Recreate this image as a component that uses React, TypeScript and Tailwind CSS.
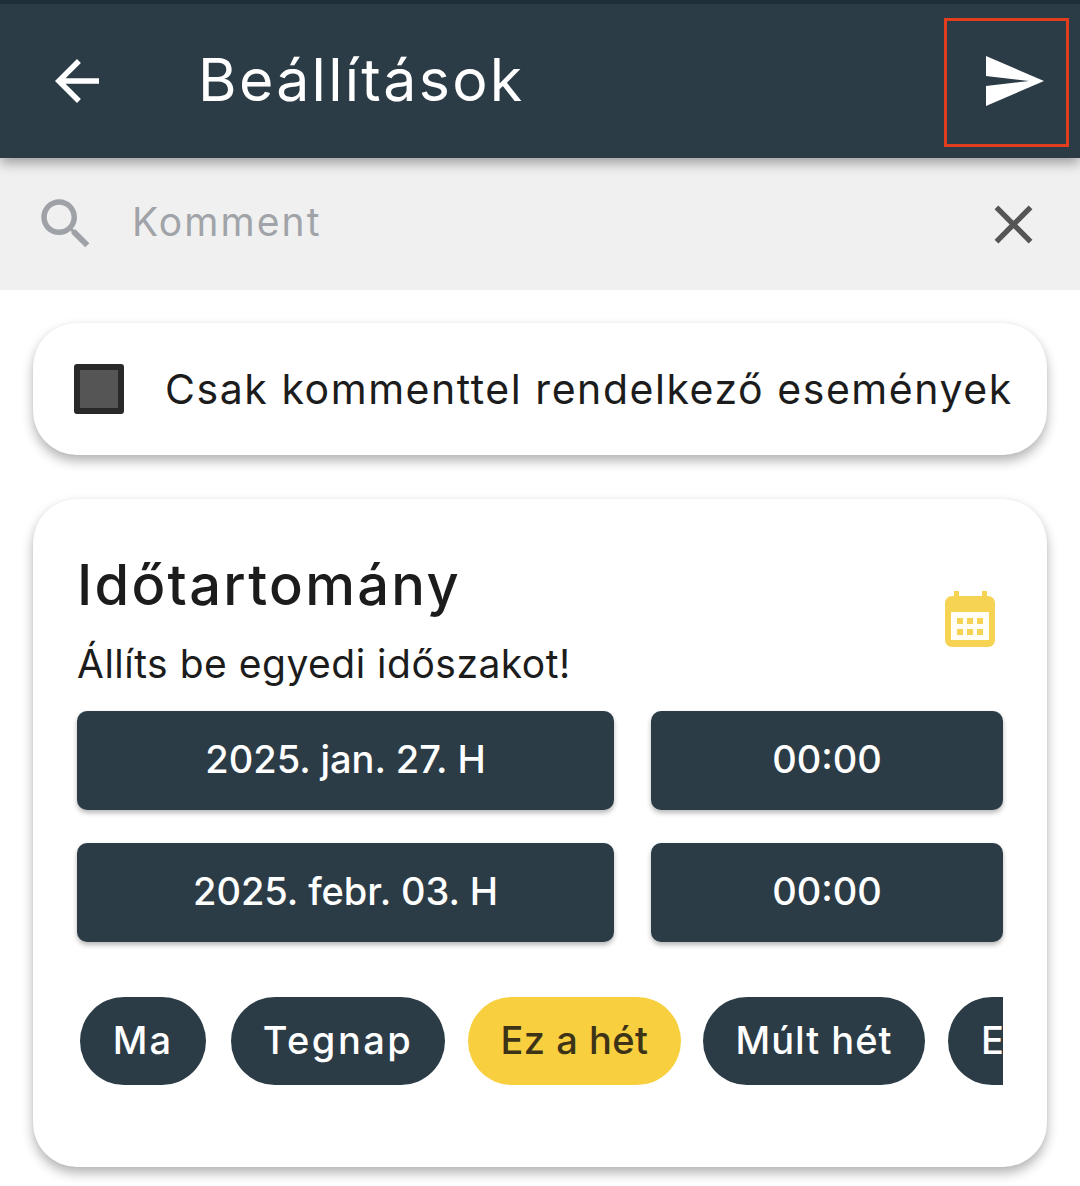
const navy = "bg-[#2c3c46]";

function ArrowBackIcon() {
  return (
    <svg viewBox="0 0 24 24" className="w-[66px] h-[66px]" fill="#ffffff">
      <path d="M20 11H7.83l5.59-5.59L12 4l-8 8 8 8 1.41-1.41L7.83 13H20v-2z" />
    </svg>
  );
}

function SearchIcon() {
  return (
    <svg viewBox="0 0 24 24" className="w-[66px] h-[66px]" fill="#9ea2a7">
      <path d="M15.5 14h-.79l-.28-.27C15.41 12.59 16 11.11 16 9.5 16 5.91 13.09 3 9.5 3S3 5.91 3 9.5 5.91 16 9.5 16c1.61 0 3.09-.59 4.23-1.57l.27.28v.79l5 4.99L20.49 19l-4.99-5zm-6 0C7.01 14 5 11.99 5 9.5S7.01 5 9.5 5 14 7.01 14 9.5 11.99 14 9.5 14z" />
    </svg>
  );
}

function CloseIcon() {
  return (
    <svg viewBox="0 0 24 24" className="w-[65px] h-[65px]" fill="#555555">
      <path d="M19 6.41 17.59 5 12 10.59 6.41 5 5 6.41 10.59 12 5 17.59 6.41 19 12 13.41 17.59 19 19 17.59 13.41 12z" />
    </svg>
  );
}

function SendIcon() {
  return (
    <svg viewBox="0 0 60 50" className="w-[60px] h-[50px]" fill="#ffffff">
      <path d="M1 0 L59 25 L1 50 L1 30 L44 25 L1 20 Z" />
    </svg>
  );
}

function CalendarIcon() {
  return (
    <svg viewBox="0 0 50 56" className="w-[50px] h-[56px]">
      <path d="M9 0h5v5h23V0h5v5h1a7 7 0 0 1 7 7v37a7 7 0 0 1-7 7H7a7 7 0 0 1-7-7V12a7 7 0 0 1 7-7h2z" fill="#f6d352" />
      <rect x="6" y="21" width="38" height="28" fill="#fffdf5" />
      {[12, 22, 32].map((x) =>
        [27, 38].map((y) => <rect key={`${x}-${y}`} x={x} y={y} width="6" height="6" fill="#f6d352" />)
      )}
    </svg>
  );
}

function DateButton({ label, wide }: { label: string; wide?: boolean }) {
  return (
    <div
      className={`${navy} ${wide ? "w-[537px]" : "w-[352px]"} h-[99px] pb-[2px] rounded-[10px] flex items-center justify-center text-white text-[38px] font-medium shadow-[0_3px_5px_rgba(0,0,0,0.28)]`}
    >
      {label}
    </div>
  );
}

function Chip({ label, active, className }: { label: string; active?: boolean; className: string }) {
  return (
    <div
      className={`${className} ${active ? "bg-[#f8d03f] text-[#3d3418]" : `${navy} text-white`} shrink-0 h-[88px] pb-[2px] rounded-full flex items-center text-[38px] font-medium whitespace-nowrap`}
    >
      {label}
    </div>
  );
}

export default function App() {
  return (
    <div className="w-[1080px] h-[1186px] overflow-hidden bg-white relative font-['Inter','Noto_Sans',sans-serif]">
      <header className={`${navy} h-[158px] border-t-4 border-[#1f2e37] flex items-center relative z-10 shadow-[0_5px_12px_rgba(0,0,0,0.35)]`}>
        <div className="ml-[44px]">
          <ArrowBackIcon />
        </div>
        <h1 className="ml-[88px] text-white text-[59px] font-normal tracking-[2.3px] mb-[1px]">Beállítások</h1>
        <div className="ml-auto mr-[35px] mb-[1px]">
          <SendIcon />
        </div>
        {/* Highlight frame around the send action */}
        <div className="absolute left-[944px] top-[14px] w-[125px] h-[129px] border-[3px] border-[#e23d1c]" />
      </header>

      <div className="h-[132px] bg-[#f0f0f0] flex items-center">
        <div className="ml-[33px]">
          <SearchIcon />
        </div>
        <span className="ml-[33px] text-[39px] text-[#a0a4a9] tracking-[2.1px] mb-[4px]">Komment</span>
        <div className="ml-auto mr-[34px]">
          <CloseIcon />
        </div>
      </div>

      <main className="px-[33px] pt-[33px]">
        <section className="h-[132px] rounded-[44px] bg-white flex items-center shadow-[0_6px_12px_rgba(0,0,0,0.3),0_0_2px_rgba(0,0,0,0.06)]">
          <div className="ml-[41px] w-[50px] h-[50px] rounded-[3px] border-[6px] border-[#292929] bg-[#555555]" />
          <span className="ml-[41px] mt-[2px] text-[41px] text-[#1c1c1c] whitespace-nowrap tracking-[1.55px]">
            Csak kommenttel rendelkező események
          </span>
        </section>

        <section className="mt-[44px] h-[668px] rounded-[44px] bg-white px-[44px] pt-[46px] shadow-[0_6px_12px_rgba(0,0,0,0.3),0_0_2px_rgba(0,0,0,0.06)]">
          <div className="flex justify-between">
            <div>
              <h2 className="text-[56px] leading-[80px] font-medium text-[#1c1c1c] tracking-[2.3px]">Időtartomány</h2>
              <p className="text-[39px] leading-[60px] text-[#1c1c1c] mt-[9px] tracking-[0.5px]">Állíts be egyedi időszakot!</p>
            </div>
            <div className="mt-[46px] mr-[8px]">
              <CalendarIcon />
            </div>
          </div>
          <div className="mt-[17px] flex flex-col gap-[33px] w-[926px]">
            <div className="flex justify-between">
              <DateButton wide label="2025. jan. 27. H" />
              <DateButton label="00:00" />
            </div>
            <div className="flex justify-between">
              <DateButton wide label="2025. febr. 03. H" />
              <DateButton label="00:00" />
            </div>
          </div>
          <div className="mt-[55px] w-[926px] overflow-hidden flex">
            <Chip className="ml-[3px] w-[126px] justify-center tracking-[2.2px]" label="Ma" />
            <Chip className="ml-[25px] w-[214px] justify-center tracking-[2.5px]" label="Tegnap" />
            <Chip className="ml-[23px] w-[213px] justify-center tracking-[0.5px]" label="Ez a hét" active />
            <Chip className="ml-[22px] w-[222px] justify-center tracking-[1px]" label="Múlt hét" />
            <Chip className="ml-[23px] w-[260px] pl-[33px]" label="Ez a hónap" />
          </div>
        </section>
      </main>
    </div>
  );
}
